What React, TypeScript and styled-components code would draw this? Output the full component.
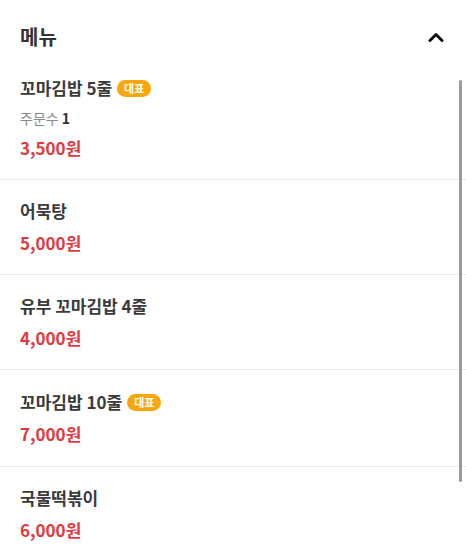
import React from "react";
import styled, { createGlobalStyle } from "styled-components";

const GlobalStyle = createGlobalStyle`
  html, body {
    margin: 0;
    padding: 0;
    background: #ffffff;
  }
  body {
    font-family: "Noto Sans CJK KR", "Noto Sans", sans-serif;
    color: #333333;
  }
`;

type MenuItem = {
  name: string;
  price: number;
  best?: boolean;
  orders?: number;
};

const items: MenuItem[] = [
  { name: "꼬마김밥 5줄", price: 3500, best: true, orders: 1 },
  { name: "어묵탕", price: 5000 },
  { name: "유부 꼬마김밥 4줄", price: 4000 },
  { name: "꼬마김밥 10줄", price: 7000, best: true },
  { name: "국물떡볶이", price: 6000 },
];

const formatPrice = (n: number) => n.toLocaleString("ko-KR") + "원";

const App = () => {
  return (
    <>
      <GlobalStyle />
      <Panel>
        <Header>
          <Title>메뉴</Title>
          <ToggleButton aria-label="접기">
            <svg width="16" height="10" viewBox="0 0 16 10">
              <polyline
                points="2,8.5 8,2.5 14,8.5"
                fill="none"
                stroke="#111"
                strokeWidth="3"
                strokeLinecap="round"
                strokeLinejoin="round"
              />
            </svg>
          </ToggleButton>
        </Header>
        <List>
          {items.map(item => (
            <Row key={item.name} $tall={item.best && item.orders === undefined}>
              <NameLine>
                <Name>{item.name}</Name>
                {item.best && <Badge>대표</Badge>}
              </NameLine>
              {item.orders !== undefined && (
                <Meta>
                  주문수 <strong>{item.orders}</strong>
                </Meta>
              )}
              <Price $tight={item.orders !== undefined}>
                {formatPrice(item.price)}
              </Price>
            </Row>
          ))}
        </List>
        <ScrollThumb />
      </Panel>
    </>
  );
};
export default App;

const Panel = styled.div`
  position: relative;
  width: 466px;
  height: 560px;
  overflow: hidden;
  background: #ffffff;
`;

const Header = styled.div`
  display: flex;
  align-items: center;
  justify-content: space-between;
  padding: 23px 20px 6px 20px;
`;

const Title = styled.h2`
  margin: 0;
  font-size: 20px;
  line-height: 28px;
  font-weight: 700;
  color: #333333;
`;

const ToggleButton = styled.button`
  display: flex;
  align-items: center;
  justify-content: center;
  width: 20px;
  height: 20px;
  padding: 0;
  border: none;
  background: none;
  cursor: pointer;
`;

const List = styled.ul`
  list-style: none;
  margin: 0;
  padding: 0;
`;

const Row = styled.li<{ $tall?: boolean }>`
  display: flex;
  flex-direction: column;
  padding: ${p => (p.$tall ? "20px 20px 20px" : "19px 20px 19px")};
  border-bottom: 1px solid #ebebeb;

  &:last-child {
    border-bottom: none;
  }
`;

const NameLine = styled.div`
  display: flex;
  align-items: center;
  gap: 5px;
  height: 24px;
`;

const Name = styled.span`
  font-size: 17px;
  line-height: 24px;
  font-weight: 600;
  color: #3a3a3a;
`;

const Badge = styled.span`
  display: inline-flex;
  align-items: center;
  justify-content: center;
  height: 17px;
  padding: 0 7px;
  border-radius: 9px;
  background: #f7a70a;
  color: #ffffff;
  font-size: 11px;
  font-weight: 700;
  line-height: 17px;
`;

const Meta = styled.div`
  margin-top: 6px;
  font-size: 14px;
  line-height: 24px;
  color: #8a8a8a;

  strong {
    color: #333333;
    font-weight: 700;
  }
`;

const Price = styled.div<{ $tight?: boolean }>`
  margin-top: ${p => (p.$tight ? "6px" : "8px")};
  font-size: 17px;
  line-height: 24px;
  font-weight: 700;
  color: #e0393e;
`;

const ScrollThumb = styled.div`
  position: absolute;
  top: 80px;
  right: 4px;
  width: 3px;
  height: 402px;
  border-radius: 2px;
  background: #9a9a9a;
`;
